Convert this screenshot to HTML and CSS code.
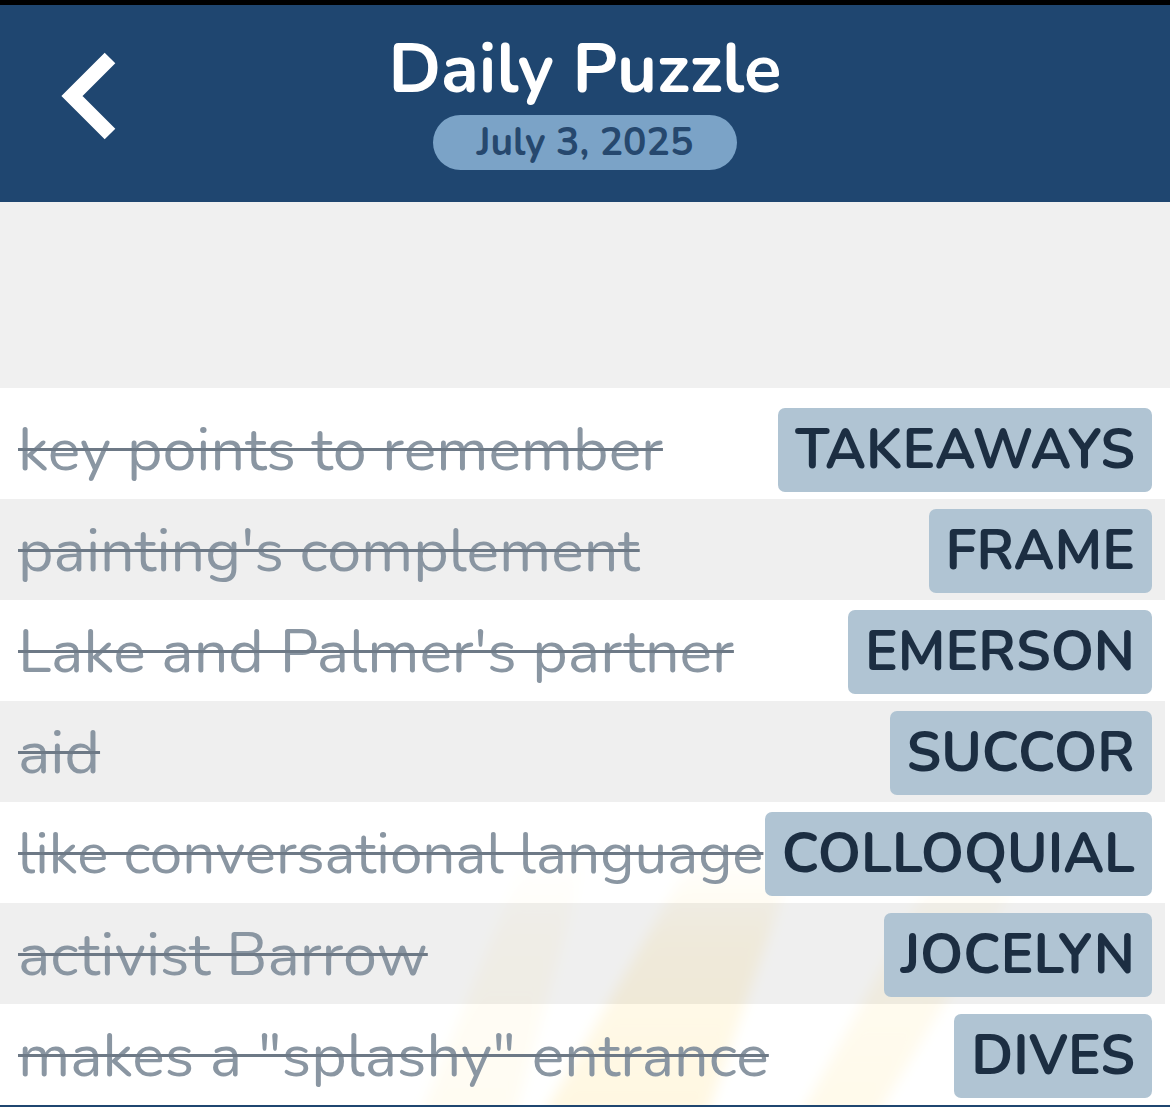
FILE: index.html
```html
<!DOCTYPE html>
<html>
<head>
    <title>Daily Puzzle</title>
    <link rel="stylesheet" href="styles.css">
</head>
<body>
    <header class="topbar">
        <a href="#" class="back-btn" aria-label="Back">
            <svg width="60" height="90" viewBox="0 0 60 90">
                <polyline points="52,6 14,44 52,82" fill="none" stroke="#fff" stroke-width="15" stroke-linejoin="miter" stroke-miterlimit="4"/>
            </svg>
        </a>
        <div class="title-block">
            <h1>Daily Puzzle</h1>
            <span class="date-pill">July 3, 2025</span>
        </div>
        <div></div>
    </header>

    <div class="spacer"></div>

    <div class="clue-list">
        <!-- faint sunburst behind the rows -->
        <svg class="rays" width="1170" height="300" viewBox="0 0 1170 300">
            <defs>
                <linearGradient id="fade" x1="0" y1="1" x2="0" y2="0">
                    <stop offset="0" stop-color="#ffd35c" stop-opacity="1"/>
                    <stop offset="0.65" stop-color="#ffd35c" stop-opacity="0.7"/>
                    <stop offset="1" stop-color="#ffd35c" stop-opacity="0"/>
                </linearGradient>
                <filter id="soft" x="-20%" y="-20%" width="140%" height="140%">
                    <feGaussianBlur stdDeviation="7"/>
                </filter>
            </defs>
            <g filter="url(#soft)">
                <polygon points="543,310 707,310 800,40 700,40" fill="url(#fade)"/>
                <polygon points="800,310 877,310 1040,40 950,40" fill="url(#fade)" opacity="0.7"/>
                <polygon points="420,310 515,310 590,40 530,40" fill="url(#fade)" opacity="0.45"/>
            </g>
        </svg>

        <div class="clue-row">
            <span class="clue">key points to remember</span>
            <span class="answer">TAKEAWAYS</span>
        </div>
        <div class="clue-row">
            <span class="clue">painting's complement</span>
            <span class="answer">FRAME</span>
        </div>
        <div class="clue-row">
            <span class="clue">Lake and Palmer's partner</span>
            <span class="answer">EMERSON</span>
        </div>
        <div class="clue-row">
            <span class="clue">aid</span>
            <span class="answer">SUCCOR</span>
        </div>
        <div class="clue-row">
            <span class="clue clue-tight">like conversational language</span>
            <span class="answer">COLLOQUIAL</span>
        </div>
        <div class="clue-row">
            <span class="clue">activist Barrow</span>
            <span class="answer">JOCELYN</span>
        </div>
        <div class="clue-row">
            <span class="clue">makes a "splashy" entrance</span>
            <span class="answer">DIVES</span>
        </div>
    </div>
</body>
</html>
```

FILE: styles.css
```css
body {
    font-family: "Nunito", Lato, "Noto Sans", sans-serif;
    margin: 0;
    padding: 0;
    background: #fff;
    color: #1c2e42;
    overflow: hidden;
}

.topbar {
    display: grid;
    grid-template-columns: 1fr auto 1fr;
    height: 197px;
    background: #1f4670;
    border-top: 5px solid #000;
}

.back-btn {
    display: block;
    margin: 47px 0 0 58px;
    width: 60px;
    height: 90px;
}

.title-block {
    display: flex;
    flex-direction: column;
    align-items: center;
}

h1 {
    margin: 22px 0 0;
    color: #fff;
    font-size: 69px;
    font-weight: 700;
    line-height: 84px;
}

.date-pill {
    display: inline-block;
    margin-top: 4px;
    width: 304px;
    height: 55px;
    line-height: 55px;
    text-align: center;
    background: #7ba3c7;
    color: #26486e;
    font-size: 39px;
    font-weight: 700;
    border-radius: 28px;
}

.spacer {
    height: 186px;
    background: #f0f0f0;
}

.clue-list {
    position: relative;
    padding-top: 10px;
    background: #fff;
    border-bottom: 3px solid #1f4670;
    overflow: hidden;
}

.rays {
    position: absolute;
    left: 0;
    bottom: 0;
    pointer-events: none;
}

.clue-row {
    position: relative;
    display: flex;
    align-items: center;
    justify-content: space-between;
    height: 101px;
    padding: 2px 13px 0 18px;
    margin-right: 5px;
    box-sizing: border-box;
}

.clue-row:nth-child(even) {
    background: rgba(255, 255, 255, 0.82);
}

.clue-row:nth-child(odd) {
    background: rgba(236, 236, 236, 0.82);
}

.clue {
    font-size: 61px;
    color: #8a96a2;
    text-decoration: line-through;
    text-decoration-color: #6d7986;
    text-decoration-thickness: 3px;
    white-space: nowrap;
}

.clue-tight {
    font-size: 58.4px;
}

.answer {
    background: #b0c4d3;
    color: #1c2e42;
    font-size: 55px;
    font-weight: 700;
    height: 84px;
    line-height: 84px;
    padding: 0 17px;
    border-radius: 7px;
    white-space: nowrap;
}
```
